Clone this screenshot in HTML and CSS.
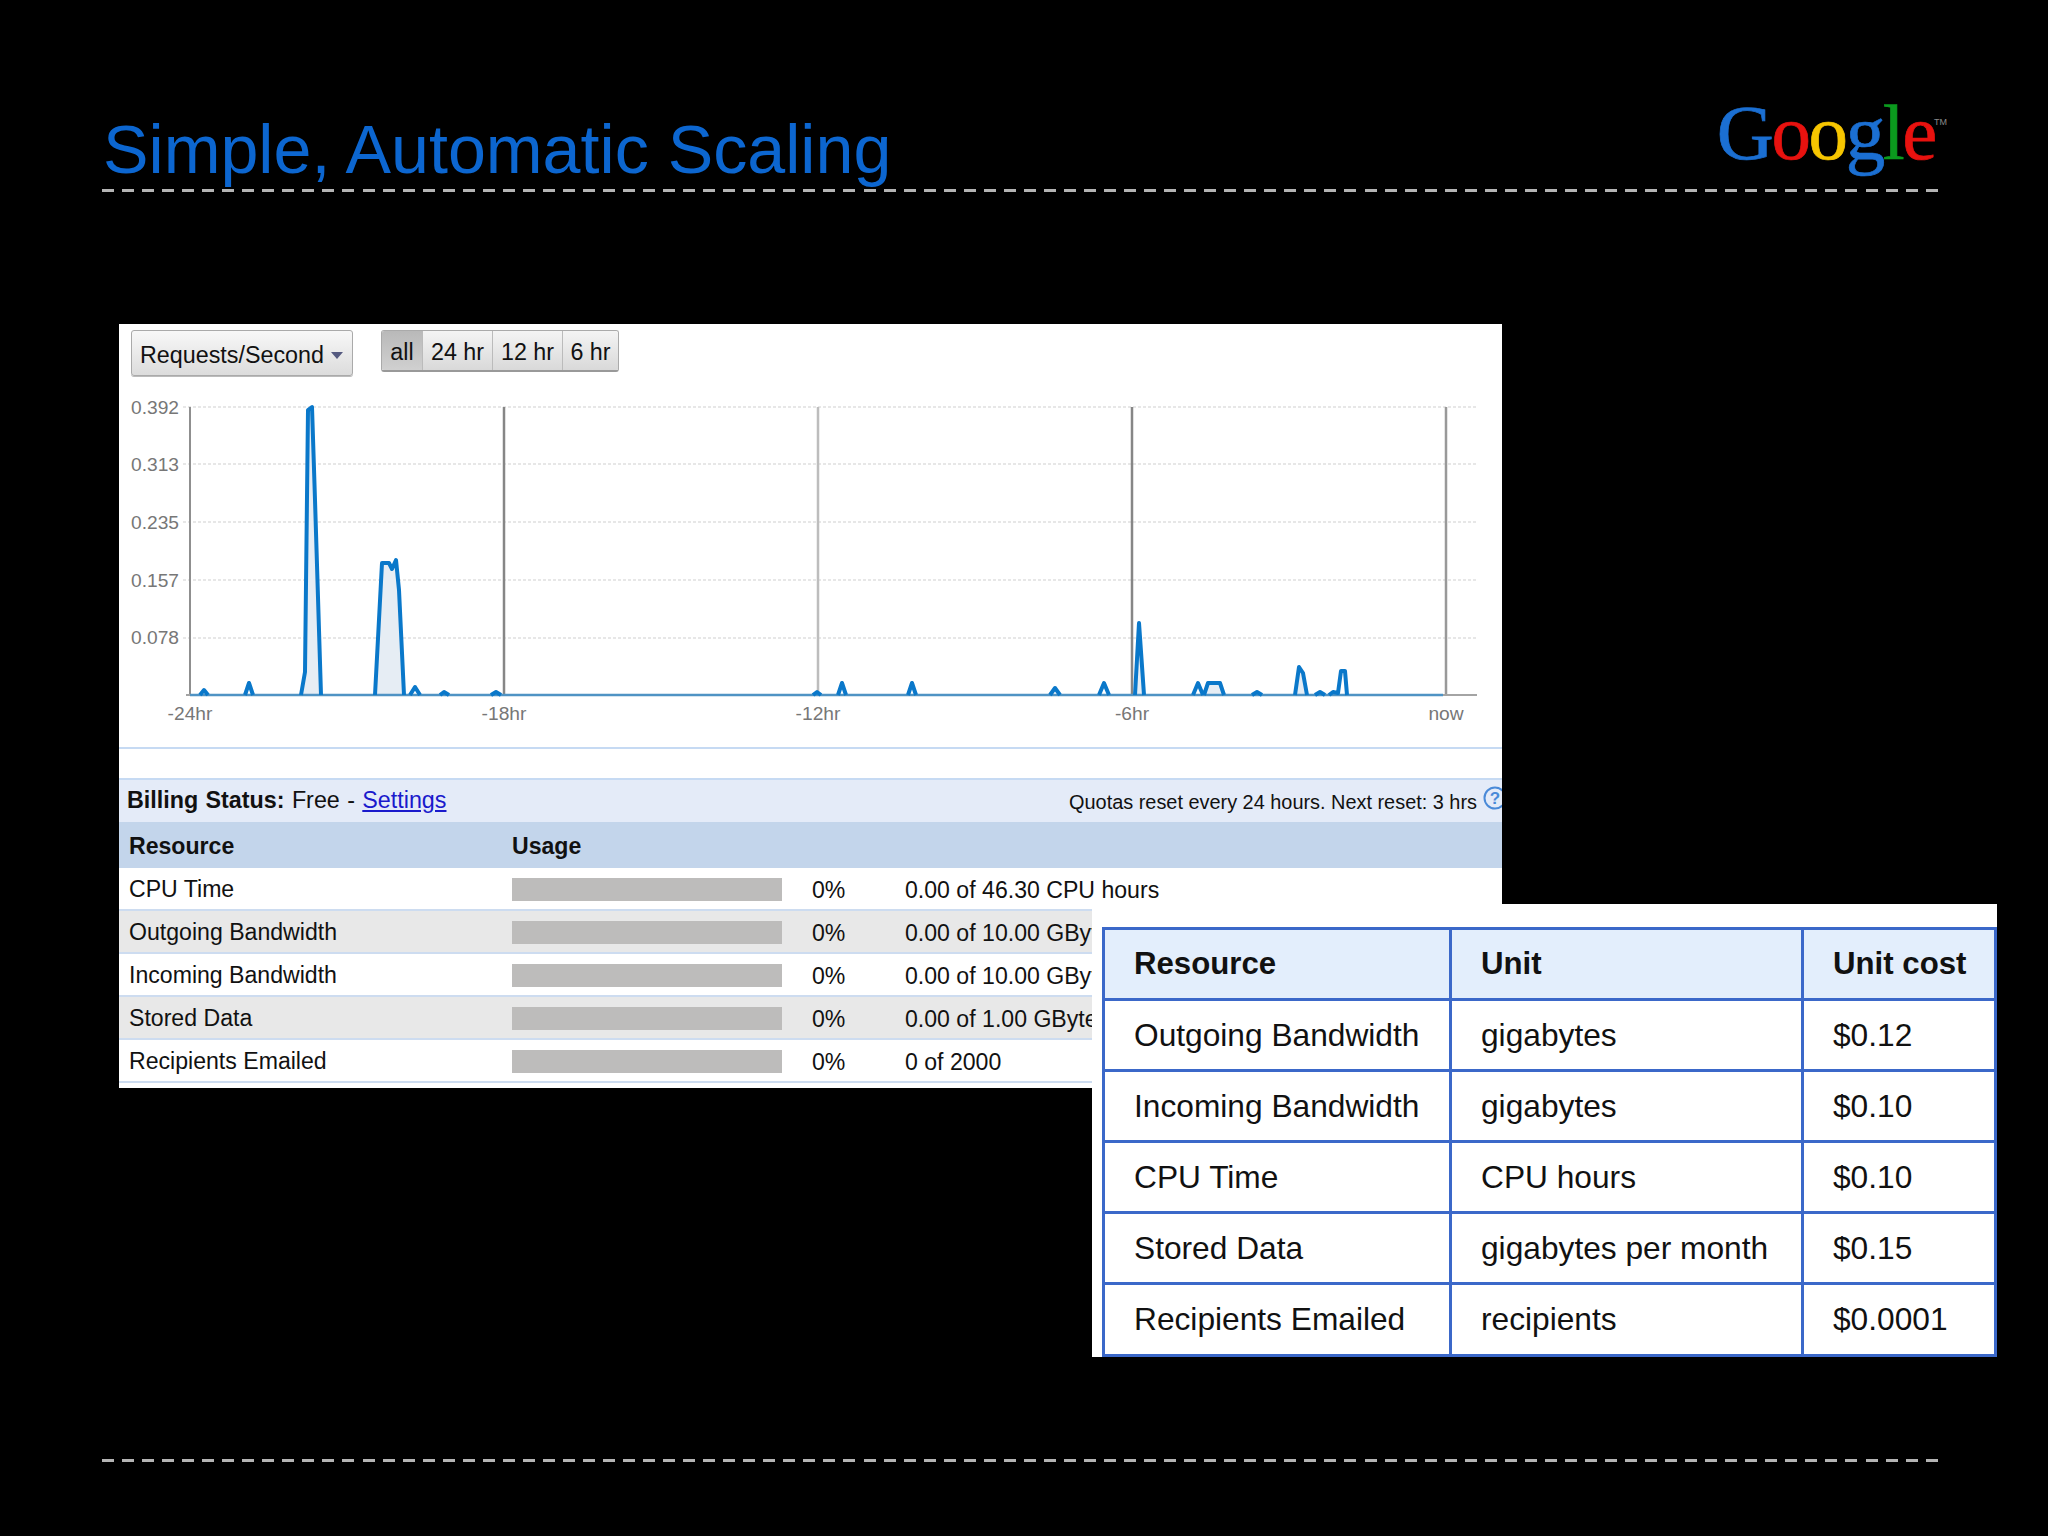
FILE: index.html
```html
<!DOCTYPE html>
<html lang="en">
<head>
<meta charset="utf-8">
<title>Simple, Automatic Scaling</title>
<link rel="stylesheet" href="styles.css">
</head>
<body>
<div class="slide">
  <header class="head">
    <h1 class="title">Simple, Automatic Scaling</h1>
    <div class="logo"><span class="c-blue">G</span><span class="c-red">o</span><span class="c-yellow">o</span><span class="c-blue">g</span><span class="c-green">l</span><span class="c-red">e</span><span class="tm">TM</span></div>
  </header>
  <div class="rule"></div>

  <section class="panel">
    <div class="toolbar">
      <div class="dropdown">Requests/Second<span class="caret"></span></div>
      <div class="segments">
        <span class="seg seg-all">all</span>
        <span class="seg seg-24">24 hr</span>
        <span class="seg seg-12">12 hr</span>
        <span class="seg seg-6">6 hr</span>
      </div>
    </div>

    <svg class="chart" viewBox="119 390 1383 357" width="1383" height="357" aria-label="Requests per second chart">
      <g class="grid">
        <line x1="183" y1="407" x2="1477" y2="407"/>
        <line x1="183" y1="464" x2="1477" y2="464"/>
        <line x1="183" y1="522" x2="1477" y2="522"/>
        <line x1="183" y1="580" x2="1477" y2="580"/>
        <line x1="183" y1="638" x2="1477" y2="638"/>
      </g>
      <line class="axis" x1="190" y1="407" x2="190" y2="696"/>
      <line class="vline dark" x1="504" y1="407" x2="504" y2="695"/>
      <line class="vline light" x1="818" y1="407" x2="818" y2="695"/>
      <line class="vline dark" x1="1132" y1="407" x2="1132" y2="695"/>
      <line class="vline mid" x1="1446" y1="407" x2="1446" y2="695"/>
      <line class="base" x1="186" y1="695" x2="1477" y2="695"/>
      <path class="area" d="M301 695L305 672L308 410L312 407L321 695ZM375 695L382 563L389 563L392 569L396 560L399 590L404 695ZM1135 695L1139 623L1144 695ZM1295 695L1299 667L1303 673L1307 695ZM1204 695L1208 683L1220 683L1224 695Z"/>
      <line class="base-blue" x1="190" y1="695" x2="1443" y2="695"/>
      <path class="spikes" d="M200 695L204 690L208 695M245 695L249 683L253 695M301 695L305 672L308 410L312 407L315 500L321 695M375 695L382 563L389 563L392 569L396 560L399 590L404 695M410 695L415 687L420 695M440 695L444 692L449 695M491 695L496 692L501 695M813 695L817 692L821 695M838 695L842 683L846 695M908 695L912 683L916 695M1050 695L1055 688L1060 695M1099 695L1104 683L1109 695M1135 695L1139 623L1144 695M1193 695L1198 683L1203 695M1204 695L1208 683L1220 683L1224 695M1252 695L1257 692L1262 695M1295 695L1299 667L1303 673L1307 695M1315 695L1320 692L1325 695M1329 695L1333 692L1338 693L1341 671L1345 671L1347 695"/>
      <g class="ylabels">
        <text x="179" y="414">0.392</text>
        <text x="179" y="471">0.313</text>
        <text x="179" y="529">0.235</text>
        <text x="179" y="587">0.157</text>
        <text x="179" y="644">0.078</text>
      </g>
      <g class="xlabels">
        <text x="190" y="720">-24hr</text>
        <text x="504" y="720">-18hr</text>
        <text x="818" y="720">-12hr</text>
        <text x="1132" y="720">-6hr</text>
        <text x="1446" y="720">now</text>
      </g>
    </svg>
    <div class="divider"></div>

    <div class="billing">
      <div class="billing-status"><b>Billing Status:</b> Free - <a class="link" href="#">Settings</a></div>
      <div class="quota">Quotas reset every 24 hours. Next reset: 3 hrs</div>
      <svg class="help" width="24" height="24" viewBox="0 0 24 24"><circle cx="12" cy="12" r="10.5" fill="none" stroke="#4a8ad8" stroke-width="2"/><text x="12" y="18" text-anchor="middle" class="help-q">?</text></svg>
    </div>

    <div class="usage-head"><span class="usage-res">Resource</span><span>Usage</span></div>
    <div class="usage-row"><span class="usage-label">CPU Time</span><span class="bar"></span><span>0%</span><span>0.00 of 46.30 CPU hours</span></div>
    <div class="usage-row alt"><span class="usage-label">Outgoing Bandwidth</span><span class="bar"></span><span>0%</span><span>0.00 of 10.00 GBytes</span></div>
    <div class="usage-row"><span class="usage-label">Incoming Bandwidth</span><span class="bar"></span><span>0%</span><span>0.00 of 10.00 GBytes</span></div>
    <div class="usage-row alt"><span class="usage-label">Stored Data</span><span class="bar"></span><span>0%</span><span>0.00 of 1.00 GBytes</span></div>
    <div class="usage-row"><span class="usage-label">Recipients Emailed</span><span class="bar"></span><span>0%</span><span>0 of 2000</span></div>
  </section>

  <section class="pricing">
    <table class="price-table">
      <colgroup><col class="col-a"><col class="col-b"><col class="col-c"></colgroup>
      <thead>
        <tr><th>Resource</th><th>Unit</th><th>Unit cost</th></tr>
      </thead>
      <tbody>
        <tr><td>Outgoing Bandwidth</td><td>gigabytes</td><td>$0.12</td></tr>
        <tr><td>Incoming Bandwidth</td><td>gigabytes</td><td>$0.10</td></tr>
        <tr><td>CPU Time</td><td>CPU hours</td><td>$0.10</td></tr>
        <tr><td>Stored Data</td><td>gigabytes per month</td><td>$0.15</td></tr>
        <tr><td>Recipients Emailed</td><td>recipients</td><td>$0.0001</td></tr>
      </tbody>
    </table>
  </section>

  <div class="rule rule-bottom"></div>
</div>
</body>
</html>
```

FILE: styles.css
```css
* { box-sizing: border-box; }
html, body { margin: 0; padding: 0; background: #000; }
.slide {
  position: relative;
  width: 2048px;
  height: 1536px;
  overflow: hidden;
  background: #000;
  font-family: "Liberation Sans", Arial, sans-serif;
  color: #111;
}

/* Header */
.head {
  display: flex;
  justify-content: space-between;
  align-items: flex-start;
  height: 189px;
  padding: 93px 101px 0 103px;
}
.title {
  margin: 22px 0 0;
  font-size: 68.2px;
  line-height: 68px;
  font-weight: 400;
  color: #0c66d0;
  white-space: nowrap;
  position: relative;
  z-index: 1;
}
.logo {
  font-family: "Liberation Serif", "Times New Roman", serif;
  font-size: 79px;
  line-height: 79px;
  letter-spacing: -2.4px;
  -webkit-text-stroke: 0.7px currentColor;
  white-space: nowrap;
}
.c-blue { color: #1b6fd2; }
.c-red { color: #e8120f; }
.c-yellow { color: #f7c600; }
.c-green { color: #0b9a1e; }
.tm {
  position: relative;
  top: -34px;
  margin-left: -1px;
  font-family: "Liberation Sans", sans-serif;
  font-size: 9px;
  letter-spacing: 0;
  -webkit-text-stroke: 0;
  color: #8a8a8a;
}
.rule {
  width: 1836px;
  height: 3px;
  margin-left: 102px;
  background: repeating-linear-gradient(90deg, #b4b4b4 0, #b4b4b4 12px, transparent 12px, transparent 20.04px);
}
.rule-bottom { margin-top: 371px; }

/* Main panel */
.panel {
  width: 1383px;
  height: 764px;
  margin: 132px 0 0 119px;
  background: #fff;
  overflow: hidden;
}
.toolbar {
  display: flex;
  align-items: flex-start;
  gap: 28px;
  height: 66px;
  padding: 6px 0 0 12px;
}
.dropdown {
  display: flex;
  align-items: center;
  width: 222px;
  height: 46px;
  padding: 4px 0 0 8px;
  font-size: 23.3px;
  border: 1px solid #aaa;
  border-radius: 3px;
  background: linear-gradient(#f8f8f8, #dcdcdc);
  box-shadow: 0 1px 0 #bbb;
}
.caret {
  width: 0;
  height: 0;
  margin-left: 7px;
  border-left: 6.5px solid transparent;
  border-right: 6.5px solid transparent;
  border-top: 7px solid #555a80;
}
.segments {
  display: flex;
  height: 42px;
  border: 1px solid #aaa;
  border-bottom: 2px solid #999;
  border-radius: 3px;
  overflow: hidden;
}
.seg {
  display: flex;
  align-items: center;
  justify-content: center;
  padding-top: 3px;
  font-size: 23.3px;
  background: linear-gradient(#f4f4f4, #d9d9d9);
  border-left: 1px solid #bbb;
}
.seg-all {
  width: 40px;
  border-left: 0;
  background: linear-gradient(#b9b9b9, #d0d0d0);
}
.seg-24 { width: 70px; }
.seg-12 { width: 70px; }
.seg-6 { width: 56px; }

/* Chart */
.chart {
  display: block;
  font-size: 19.2px;
}
.divider { height: 2px; background: #c6daf3; }
.grid line { stroke: #cfcfcf; stroke-width: 1.2; stroke-dasharray: 3 2; }
.axis { stroke: #8f8f8f; stroke-width: 2; }
.vline { stroke-width: 2.5; }
.vline.dark { stroke: #868686; }
.vline.light { stroke: #bdbdbd; }
.vline.mid { stroke: #999; }
.base { stroke: #a4a4a4; stroke-width: 2; }
.base-blue { stroke: #4f93c4; stroke-width: 2.5; }
.area { fill: #e6edf4; stroke: none; }
.spikes {
  fill: none;
  stroke: #0a78ca;
  stroke-width: 4;
  stroke-linejoin: round;
}
.ylabels text { fill: #777; text-anchor: end; }
.xlabels text { fill: #777; text-anchor: middle; }

/* Billing bar */
.billing {
  position: relative;
  display: flex;
  justify-content: space-between;
  align-items: center;
  height: 44px;
  margin-top: 29px;
  padding: 0 25px 0 8px;
  background: #e4ebf8;
  border-top: 2px solid #c6daf3;
  font-size: 23.3px;
}
.billing-status { margin-top: -1px; word-spacing: 0.9px; }
.link { color: #1a1acc; }
.quota { font-size: 19.9px; margin-top: 3px; }
.help {
  position: absolute;
  right: -5px;
  top: 6px;
}
.help-q { font-size: 17px; font-weight: 700; fill: #4a8ad8; }

/* Usage table */
.usage-head, .usage-row {
  display: grid;
  align-items: center;
  padding-left: 10px;
  font-size: 23.1px;
}
.usage-head {
  height: 46px;
  padding-top: 3px;
  background: #c3d5eb;
  font-weight: 700;
  grid-template-columns: 383px 1fr;
}
.usage-row {
  grid-template-columns: 383px 300px 93px 1fr;
  height: 43px;
  padding-top: 2px;
  border-bottom: 2px solid #cddcf0;
  white-space: nowrap;
}
.usage-row.alt { background: #e8e8e8; }
.usage-row > span { padding-top: 2px; }
.usage-row > .usage-label { padding-top: 0; }
.usage-row > .bar { padding-top: 0; }
.bar {
  display: block;
  width: 270px;
  height: 23px;
  background: #bdbcbb;
}

/* Pricing overlay */
.pricing {
  position: absolute;
  left: 1092px;
  top: 904px;
  width: 905px;
  height: 453px;
  padding: 23px 0 0 10px;
  background: #fff;
}
.price-table {
  width: 892px;
  height: 427px;
  border-collapse: collapse;
  table-layout: fixed;
  font-size: 31.7px;
  color: #111;
}
.col-a { width: 347px; }
.col-b { width: 352px; }
.col-c { width: 193px; }
.price-table th, .price-table td {
  height: 71.1px;
  padding: 0 0 0 29px;
  border: 3px solid #3b68c9;
  text-align: left;
  white-space: nowrap;
}
.price-table th { background: #e3eefc; font-weight: 700; font-size: 31.2px; }
```
